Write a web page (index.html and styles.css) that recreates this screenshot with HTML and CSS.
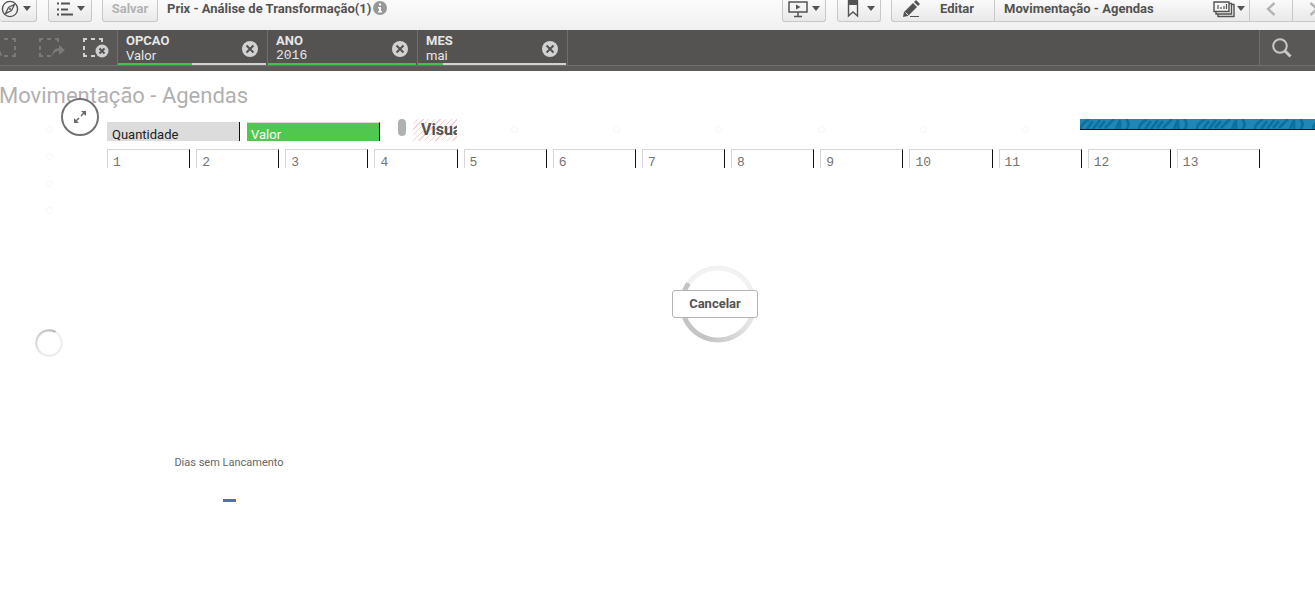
FILE: index.html
```html
<!DOCTYPE html>
<html lang="pt">
<head>
<meta charset="utf-8">
<title>Movimentação - Agendas</title>
<link rel="stylesheet" href="styles.css">
</head>
<body>
<header class="toolbar">
  <button class="btn nav" aria-label="Navegação">
    <svg width="18" height="18" viewBox="0 0 18 18"><circle cx="9" cy="9" r="7.6" fill="none" stroke="#545352" stroke-width="1.4"/><path d="M13.5 4.5 10.5 10.5 4.5 13.5 7.5 7.5Z" fill="none" stroke="#545352" stroke-width="1.3"/><circle cx="9" cy="9" r="1" fill="#545352"/></svg>
    <i class="caret"></i>
  </button>
  <button class="btn menu" aria-label="Menu">
    <svg width="17" height="18" viewBox="0 0 17 18"><path d="M1 3.5h2M1 9.500h2M1 14.500h2M5 3.500h9M5 9.500h7M5 14.500h12" stroke="#545352" stroke-width="2"/></svg>
    <i class="caret"></i>
  </button>
  <button class="btn save" disabled>Salvar</button>
  <span class="app-name">Prix - Análise de Transformação(1)</span>
  <svg class="info" width="14" height="14" viewBox="0 0 14 14"><circle cx="7" cy="7" r="7" fill="#979797"/><path d="M6 2.500h2v2H6zM5 6h3v4h1v1.500H5V10h1V7.500H5z" fill="#fff"/></svg>
  <div class="tools">
    <button class="btn tool" aria-label="Apresentação">
      <svg width="20" height="18" viewBox="0 0 20 18"><path d="M1 2h18v10H1zM10 12v4M6 16.500h8" fill="none" stroke="#545352" stroke-width="1.500"/><path d="M8 4.500l4.500 2.500L8 9.500z" fill="#545352"/></svg>
      <i class="caret"></i>
    </button>
    <button class="btn tool" aria-label="Marcadores">
      <svg width="20" height="18" viewBox="0 0 20 18"><path d="M5.500 1v15L10 12l4.500 4V1z" fill="none" stroke="#545352" stroke-width="1.400"/><path d="M5 0h10v5H5z" fill="#545352"/></svg>
      <i class="caret"></i>
    </button>
    <div class="group">
      <button class="btn edit">
        <svg width="18" height="18" viewBox="0 0 18 18"><path d="M1 17l1-5L11 3l4 4-9 9z M12 2l2-2 4 4-2 2z" fill="#545352"/><path d="M3.500 12.500l3 3" stroke="#eee"/><path d="M8 16.500h9" stroke="#545352"/></svg>
        <span>Editar</span>
      </button>
      <button class="btn sheet-name">
        <span>Movimentação - Agendas</span>
        <svg width="22" height="18" viewBox="0 0 22 18"><path d="M1 2h15v9.500H1zM18.500 4.500H21V16.500H5V14M16 3.500h2.500V14H3v-2" fill="none" stroke="#545352" stroke-width="1.400"/><path d="M5 5v4M8 7v2M11 6v3M13.500 4v5" stroke="#545352" stroke-width="1.200"/></svg>
        <i class="caret"></i>
      </button>
      <button class="btn step" aria-label="Anterior"><svg width="10" height="14" viewBox="0 0 10 14"><path d="M8.500 1 2 7l6.500 6" fill="none" stroke="#b3b3b3" stroke-width="2.400"/></svg></button>
      <button class="btn step" aria-label="Próxima"><svg width="10" height="14" viewBox="0 0 10 14"><path d="M1.500 1 8 7l-6.500 6" fill="none" stroke="#b3b3b3" stroke-width="2.400"/></svg></button>
    </div>
  </div>
</header>

<nav class="selections">
  <div class="history">
    <button class="hbtn" aria-label="Voltar"><svg width="26" height="22" viewBox="0 0 26 22"><path d="M7 2H4v3M11 2h4M19 2h3v3M22 9v4M22 16v3h-3M15 19h-4" fill="none" stroke="#7b7a79" stroke-width="2"/><path d="M9 20c0-5-2-7-6-7V9l-7 6 7 6v-4c3 0 5 1 6 3z" fill="#7b7a79"/></svg></button>
    <button class="hbtn" aria-label="Avançar"><svg width="26" height="22" viewBox="0 0 26 22"><path d="M4 2H1v3M8 2h4M16 2h3v3M1 9v4M1 16v3h3M8 19h4" fill="none" stroke="#7b7a79" stroke-width="2"/><path d="M13 20c0-6 3-9 7-9V8l6 5-6 5v-4c-3 0-6 2-7 6z" fill="#7b7a79"/></svg></button>
    <button class="hbtn" aria-label="Limpar seleções"><svg width="26" height="22" viewBox="0 0 26 22"><path d="M4 2H1v3M8 2h4M16 2h3v3M1 9v4M1 16v3h3M8 19h4" fill="none" stroke="#d2d2d2" stroke-width="2"/><circle cx="19" cy="14" r="6.500" fill="#cfcfcf"/><path d="M16.500 11.500l5 5m0-5l-5 5" stroke="#545352" stroke-width="2"/></svg></button>
  </div>
  <div class="field">
    <div><b>OPCAO</b><span>Valor</span></div>
    <button class="clear" aria-label="Limpar OPCAO"><svg width="16" height="16" viewBox="0 0 16 16"><circle cx="8" cy="8" r="8" fill="#d2d2d2"/><path d="M4.500 4.500l7 7m0-7l-7 7" stroke="#545352" stroke-width="2"/></svg></button>
    <progress max="100" value="50" aria-label="OPCAO"></progress>
  </div>
  <div class="field">
    <div><b>ANO</b><span class="num">2016</span></div>
    <button class="clear" aria-label="Limpar ANO"><svg width="16" height="16" viewBox="0 0 16 16"><circle cx="8" cy="8" r="8" fill="#d2d2d2"/><path d="M4.500 4.500l7 7m0-7l-7 7" stroke="#545352" stroke-width="2"/></svg></button>
    <progress max="100" value="100" aria-label="ANO"></progress>
  </div>
  <div class="field">
    <div><b>MES</b><span>mai</span></div>
    <button class="clear" aria-label="Limpar MES"><svg width="16" height="16" viewBox="0 0 16 16"><circle cx="8" cy="8" r="8" fill="#d2d2d2"/><path d="M4.500 4.500l7 7m0-7l-7 7" stroke="#545352" stroke-width="2"/></svg></button>
    <progress max="100" value="17" aria-label="MES"></progress>
  </div>
  <div class="rest"></div>
  <button class="search" aria-label="Pesquisar"><svg width="20" height="20" viewBox="0 0 20 20"><circle cx="8" cy="8" r="6.800" fill="none" stroke="#c8c8c8" stroke-width="2"/><path d="M13 13l5.500 5.500" stroke="#c8c8c8" stroke-width="3"/></svg></button>
</nav>

<main class="sheet">
  <h1>Movimentação - Agendas</h1>
  <button class="expand" aria-label="Expandir"><svg width="12" height="12" viewBox="0 0 12 12"><path d="M7 0h5v5zM0 7v5h5z" fill="#6b6b6b"/><path d="M10 2 7 5M2 10l3-3" stroke="#6b6b6b" stroke-width="1.500"/></svg></button>
  <div class="columns">
    <aside class="side">
      <i class="dot"></i><i class="dot"></i><i class="dot"></i><i class="dot"></i>
      <i class="ring"></i>
    </aside>
    <section class="content">
      <div class="filters">
        <button class="option">Quantidade</button>
        <button class="option chosen">Valor</button>
        <i class="thumb"></i>
        <div class="visual">Visua</div>
        <div class="pending"><i class="dot"></i><i class="dot"></i><i class="dot"></i><i class="dot"></i><i class="dot"></i><i class="dot"></i></div>
        <svg class="banner" height="11"><defs><pattern id="waves" width="58" height="11" patternUnits="userSpaceOnUse"><rect width="58" height="11" fill="#1f86b5"/><path d="M0 10Q4 2 9 1M7 10L13 2M13 10L20 1M19 9L25 2M25 9L34 0M36 10L40 1V10M46 0q5 5 0 11" fill="none" stroke="#0b719c" stroke-width="2.800"/></pattern></defs><rect width="100%" height="10" fill="url(#waves)"/><rect y="10" width="100%" height="1" fill="#001018"/></svg>
      </div>
      <div class="days">
        <button>1</button><button>2</button><button>3</button><button>4</button><button>5</button><button>6</button><button>7</button><button>8</button><button>9</button><button>10</button><button>11</button><button>12</button><button>13</button>
      </div>
      <div class="kpi"><span>Dias sem Lancamento</span><i></i></div>
    </section>
  </div>
  <div class="loading">
    <i class="spinner"></i>
    <button>Cancelar</button>
  </div>
</main>
</body>
</html>
```
FILE: styles.css
```css
* { box-sizing: border-box; }
body { margin: 0; background: #fff; color: #545352; font-family: Roboto, "Open Sans", sans-serif; font-size: 13px; overflow: hidden; }
button { font: inherit; color: inherit; margin: 0; padding: 0; border: 0; background: none; }
svg { display: block; flex: none; }

.toolbar { display: flex; align-items: flex-start; height: 30px; overflow: hidden; background: linear-gradient(#fbfbfb, #f0f0f0); font-weight: 700; }
.btn { display: flex; align-items: center; justify-content: center; height: 22px; padding-bottom: 4px; border: 1px solid #c8c8c8; border-top: 0; border-radius: 0 0 3px 3px; background: linear-gradient(#fafafa, #e9e9e9); font-weight: 700; }
.caret { flex: none; border: 4px solid transparent; border-top: 5px solid #545352; border-bottom: 0; }
.nav { width: 37px; gap: 4px; padding-right: 4px; border-left: 0; }
.menu { width: 44px; margin-left: 11px; gap: 4px; }
.save { width: 56px; margin: 0 9px 0 10px; color: #b3b3b3; }
.app-name { line-height: 18px; white-space: nowrap; }
.info { margin: 1px 0 0 2px; }
.tools { display: flex; gap: 11px; margin-left: auto; }
.tool { width: 44px; gap: 4px; }
.tool + .group { margin-left: -1px; }
.group { display: flex; margin-right: -20px; }
.group .btn { border-right: 0; border-radius: 0; }
.group .edit { width: 103px; gap: 20px; padding-right: 10px; border-radius: 0 0 0 3px; }
.group .sheet-name { width: 255px; padding: 0 4px 4px 9px; gap: 2px; }
.sheet-name span { margin-right: auto; }
.step { width: 43px; }

.selections { display: flex; height: 41px; background: #545352; border-bottom: 5px solid #5c5b5a; box-shadow: inset 0 -1px #706f6e; }
.history { display: flex; align-items: center; gap: 18px; width: 117px; padding-left: 39px; background: #595857; border-bottom: 1px solid #706f6e; }
.hbtn { flex: none; }
.hbtn:first-child { margin-left: -46px; }
.history .hbtn:first-child + .hbtn { margin-left: 2px; }
.field { display: grid; grid-template-columns: 1fr 16px; grid-template-rows: 33px 2px; width: 150px; height: 35px; padding: 0 9px 0 8px; border-left: 1px solid #706f6e; color: #e6e6e6; line-height: 15px; }
.field div { display: flex; flex-direction: column; padding-top: 3px; }
.num { font-family: "Liberation Mono", monospace; }
.clear { align-self: center; padding-top: 4px; }
.field progress { grid-column: 1 / 3; width: auto; height: 2px; margin: 0 -8px; appearance: none; border: 0; }
progress::-webkit-progress-bar { background: #d2d2d2; }
progress::-webkit-progress-value { background: #3fc34d; }
.rest { flex: 1; height: 35px; border: solid #706f6e; border-width: 0 0 0 1px; }
.search { display: flex; align-items: center; width: 56px; height: 35px; padding-left: 12px; background: #595857; border-left: 1px solid #706f6e; }

.sheet { position: relative; padding-top: 13px; min-height: 520px; }
h1 { margin: 0 0 11px -1px; color: #b0b0b0; font-size: 22px; line-height: 24px; font-weight: 400; }
.expand { position: absolute; left: 61px; top: 27px; display: grid; place-items: center; width: 38px; height: 38px; border: 2px solid #737373; border-radius: 50%; background: #fff; }
.columns { display: grid; grid-template-columns: 107px 1fr; }
.dot { width: 7px; height: 7px; border: 1px solid #f6f6f6; border-radius: 50%; }
.side { display: flex; flex-direction: column; gap: 20px; align-items: center; padding: 7px 9px 0 0; }
.ring { width: 28px; height: 28px; margin-top: 95px; border-radius: 50%; background: conic-gradient(from 30deg, #f2f2f2, #ececec 50%, #bdbdbd); mask: radial-gradient(circle, transparent 11px, #000 12px); }
.filters { display: flex; align-items: flex-start; height: 22px; }
.option { width: 133px; height: 19px; margin: 3px 7px 0 0; padding: 5px 4px 0 5px; overflow: hidden; background: #dcdcdc; border-right: 1px solid #111; color: #222; line-height: 16px; text-align: left; }
.chosen { padding: 4px 4px 0; background: #50c850; border-top: 1px solid #dcdcdc; color: #fff; }
.thumb { width: 8px; height: 17px; margin: 0 7px 0 11px; border-radius: 4px; background: #b0b0b0; }
.visual { width: 44px; height: 22px; padding-left: 8px; overflow: hidden; background: repeating-linear-gradient(135deg, #fff 0 3px, #f9cfcf 3px 4px); font-size: 16px; line-height: 22px; font-weight: 700; }
.pending { display: flex; flex: 1; justify-content: space-between; padding: 7px 51px 0 54px; }
.banner { width: 235px; }
.days { display: grid; grid-template-columns: repeat(13, 1fr); gap: 6px; margin-top: 8px; padding-right: 55px; }
.days button { height: 19px; padding: 5px 5px 0; overflow: hidden; border: solid #d6d6d6; border-width: 1px 1px 0 1px; border-right-color: #111; color: #737373; font-family: "Liberation Mono", monospace; font-size: 13px; line-height: 16px; text-align: left; }
.kpi { display: flex; flex-direction: column; align-items: center; gap: 29px; width: 244px; margin-top: 288px; color: #666; font-size: 11px; line-height: 14px; }
.kpi i { width: 13px; height: 3px; background: #4477aa; }
.loading { position: absolute; left: 672px; top: 194px; display: grid; place-items: center; width: 86px; height: 78px; }
.loading > * { grid-area: 1 / 1; }
.spinner { width: 78px; height: 78px; margin-left: 5px; border-radius: 50%; background: conic-gradient(from 305deg, #f2f2f2 0 30%, #e3e3e3 50%, #c4c4c4 70%, #c4c4c4); mask: radial-gradient(circle, transparent 33px, #000 34px 38px, transparent 39px); }
.loading button { z-index: 1; width: 86px; height: 28px; padding-bottom: 2px; border: 1px solid #b3b3b3; border-radius: 3px; background: #fff; font-weight: 700; }
```
